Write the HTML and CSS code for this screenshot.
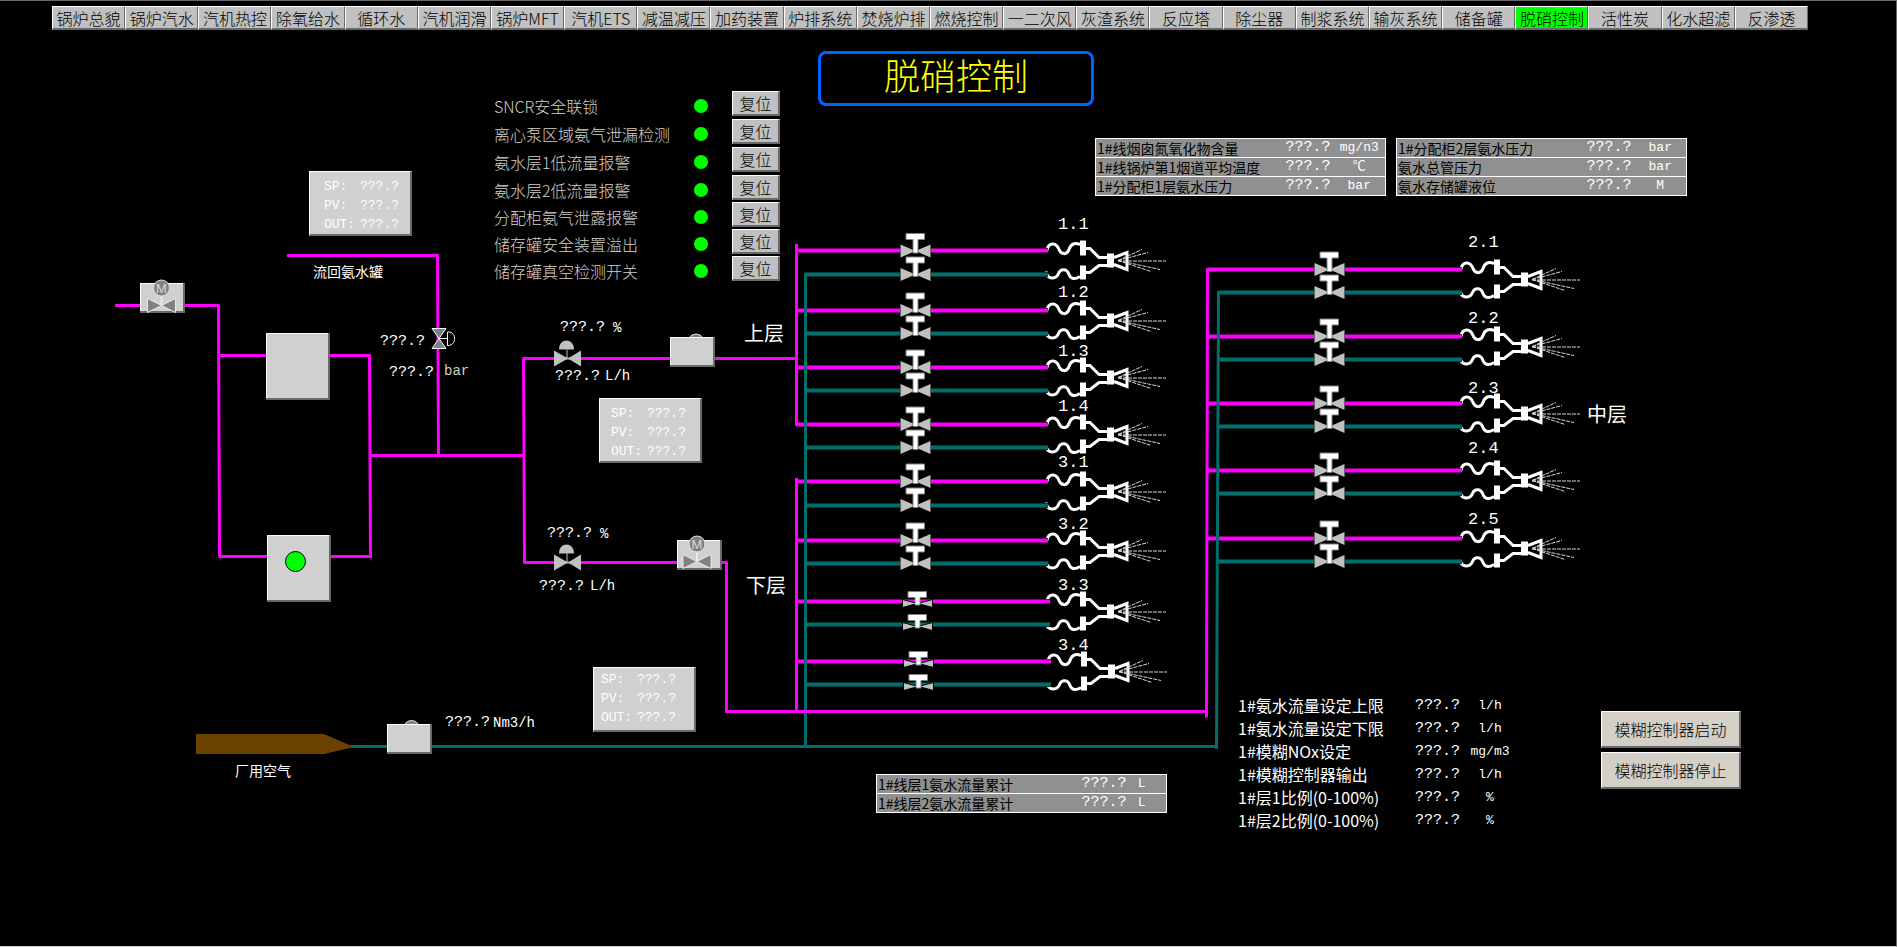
FILE: index.html
```html
<!DOCTYPE html>
<html lang="zh-CN">
<head>
<meta charset="utf-8">
<title>脱硝控制</title>
<link rel="stylesheet" href="styles.css">
</head>
<body>
<div class="screen">

<svg class="diagram" role="group" aria-label="脱硝工艺流程">
  <defs>
    <g id="valve">
      <path class="bow" d="M-15 -6.5 L0 0 L-15 6.5 Z M15 -6.5 L0 0 L15 6.5 Z"/>
      <path class="handle" d="M-9.5 -17.5 H9 V-11.5 H2.5 V2 H-2.5 V-11.5 H-9.5 Z"/>
    </g>
    <g id="valve-low">
      <path class="bow outlined" d="M-15 -2 L0 2 L-15 6 Z M15 -2 L0 2 L15 6 Z"/>
      <path class="handle" d="M-9.5 -10 H9 V-4 H2.5 V3.5 H-2.5 V-4 H-9.5 Z"/>
    </g>
    <g id="injector">
      <path class="hose" d="M0 0 C1 -8 9 -9 12 -1 C14 4 20 5 22 -1 C24 -7 28 -8 33 -6"/>
      <path class="hose" d="M-1 21 C0 29 9 30 12 22 C14 18 20 18 22 24 C24 29 28 29 33 26"/>
      <path class="hose" d="M38 -2 H43 L52 7 H61 M38 22 H43 L52 15 H61"/>
      <path class="solid" d="M33 -10 h6 v15 h-6 Z M33 15 h6 v14 h-6 Z M60 3 h7 v14 h-7 Z"/>
      <path class="cone" d="M67 7 L80 2 V19 L67 14"/>
      <path class="spray" d="M71 10 L95 -1 M71 10 L101 2 M71 10.5 H119 M71 10 L113 19 M71 10 L104 21"/>
    </g>
    <g id="control-valve">
      <path class="bow" d="M-14 -8 L0 0 L-14 8 Z M13 -8 L0 0 L13 8 Z"/>
      <path class="bow" d="M-9 -9 C-9 -21 6 -21 6 -9 Z"/>
      <path class="stem" d="M-1 -9 V0"/>
    </g>
    <g id="motor">
      <circle class="motor-head" cx="0" cy="-17.5" r="8"/>
      <path class="motor-stem" d="M0 -9 V0"/>
      <path class="motor-bow" d="M-14 -7 L0 0 L-14 7 Z M14 -7 L0 0 L14 7 Z"/>
      <text class="motor-letter" x="0" y="-13" text-anchor="middle">M</text>
    </g>
    <path id="ammonia-feeds" d="M797 250.5 H900 M931 250.5 H1048 M797 310.5 H900 M931 310.5 H1048 M797 367.5 H900 M931 367.5 H1048 M797 424.5 H900 M931 424.5 H1048
      M797 481.5 H900 M931 481.5 H1048 M797 540.5 H900 M931 540.5 H1048 M797 601.5 H902 M903 601.5 H932 M933 601.5 H1050 M797 661.5 H903 M904 661.5 H933 M934 661.5 H1051
      M1208 269.5 H1314 M1345 269.5 H1462 M1208 336.5 H1314 M1345 336.5 H1462 M1208 403.5 H1314 M1345 403.5 H1462 M1208 470.5 H1314 M1345 470.5 H1462 M1208 538.5 H1314 M1345 538.5 H1462"/>
    <path id="air-feeds" d="M805 274.5 H900 M931 274.5 H1048 M805 333.5 H900 M931 333.5 H1048 M805 390.5 H900 M931 390.5 H1048 M805 447.5 H900 M931 447.5 H1048
      M805 505.5 H900 M931 505.5 H1048 M805 563.5 H900 M931 563.5 H1048 M805 624.5 H902 M903 624.5 H932 M933 624.5 H1050 M805 684.5 H903 M904 684.5 H933 M934 684.5 H1051
      M1218 292.5 H1314 M1345 292.5 H1462 M1218 359.5 H1314 M1345 359.5 H1462 M1218 426.5 H1314 M1345 426.5 H1462 M1218 493.5 H1314 M1345 493.5 H1462 M1218 561.5 H1314 M1345 561.5 H1462"/>
  </defs>

  <!-- injectors -->
  <use href="#injector" x="1047" y="250.5"/>
  <use href="#injector" x="1047" y="310.5"/>
  <use href="#injector" x="1047" y="367.5"/>
  <use href="#injector" x="1047" y="424.5"/>
  <use href="#injector" x="1047" y="481.5"/>
  <use href="#injector" x="1047" y="540.5"/>
  <use href="#injector" x="1047" y="601.5"/>
  <use href="#injector" x="1048" y="661.5"/>
  <use href="#injector" x="1461" y="269.5"/>
  <use href="#injector" x="1461" y="336.5"/>
  <use href="#injector" x="1461" y="403.5"/>
  <use href="#injector" x="1461" y="470.5"/>
  <use href="#injector" x="1461" y="538.5"/>

  <!-- feeds -->
  <use href="#ammonia-feeds" class="ammonia-edge"/>
  <use href="#ammonia-feeds" class="ammonia"/>
  <path class="ammonia" d="M796.5 244 V426 M796.5 478 V711"/>
  <use href="#air-feeds" class="air-edge"/>
  <use href="#air-feeds" class="air"/>

  <!-- headers -->
  <path class="air" d="M350 746.5 H1218 M805.5 273 V746 M1218.5 291 L1216.5 749"/>
  <path class="ammonia" d="M115 305.5 H218.5 L219.5 556.5 H371 M218.5 355.5 H369.5 L370.5 558 M371 455.5 H524 M287 255.5 H437.5 L438.5 455.5"/>
  <path class="ammonia" d="M796.5 358.5 H523.5 L524.5 562.5 H726.5 V711.5 M725 711.5 H1207 M1206.5 717.5 L1207.5 269.5 H1212"/>

  <!-- manual valves -->
  <use href="#valve" x="915.5" y="251"/><use href="#valve" x="915.5" y="274.5"/>
  <use href="#valve" x="915.5" y="310.5"/><use href="#valve" x="915.5" y="333.5"/>
  <use href="#valve" x="915.5" y="367.5"/><use href="#valve" x="915.5" y="390.5"/>
  <use href="#valve" x="915.5" y="424.5"/><use href="#valve" x="915.5" y="447.5"/>
  <use href="#valve" x="915.5" y="481.5"/><use href="#valve" x="915.5" y="505.5"/>
  <use href="#valve" x="915.5" y="540.5"/><use href="#valve" x="915.5" y="563.5"/>
  <use href="#valve-low" x="917.5" y="601.5"/><use href="#valve-low" x="917.5" y="624.5"/>
  <use href="#valve-low" x="918.5" y="661.5"/><use href="#valve-low" x="918.5" y="684.5"/>
  <use href="#valve" x="1329.5" y="269.5"/><use href="#valve" x="1329.5" y="292.5"/>
  <use href="#valve" x="1329.5" y="336.5"/><use href="#valve" x="1329.5" y="359.5"/>
  <use href="#valve" x="1329.5" y="403.5"/><use href="#valve" x="1329.5" y="426.5"/>
  <use href="#valve" x="1329.5" y="470.5"/><use href="#valve" x="1329.5" y="493.5"/>
  <use href="#valve" x="1329.5" y="538.5"/><use href="#valve" x="1329.5" y="561.5"/>

  <!-- control valves -->
  <use href="#control-valve" x="568" y="358.5"/>
  <use href="#control-valve" x="568" y="562.5"/>
  <path class="relief" d="M432 328.5 H446 L439 338.5 L446 348.5 H432 L439 338.5 Z"/>
  <path class="relief-arm" d="M439 338.5 H447.5 M447.5 332 V345.5 M447.5 332 C457 331 457 346 447.5 345.5"/>

  <!-- equipment -->
  <path class="shade" d="M266 333 h64 v67 h-64 Z M267 535 h64 v67 h-64 Z"/>
  <path class="light" d="M266 333 h62 v65 h-62 Z M267 535 h62 v65 h-62 Z"/>
  <path class="face" d="M267 334 h61 v64 h-61 Z M268 536 h61 v64 h-61 Z"/>
  <circle class="running" cx="295.5" cy="561.5" r="10"/>
  <circle class="motor-head" cx="696" cy="342" r="8"/>
  <circle class="motor-head" cx="411.5" cy="728.5" r="8"/>
  <path class="shade" d="M140 283 h45 v30 h-45 Z M677 540 h45 v30 h-45 Z M670 337 h45 v30 h-45 Z M387 724 h45 v30 h-45 Z"/>
  <path class="light" d="M140 283 h43 v28 h-43 Z M677 540 h43 v28 h-43 Z M670 337 h43 v28 h-43 Z M387 724 h43 v28 h-43 Z"/>
  <path class="face" d="M141 284 h42 v27 h-42 Z M678 541 h42 v27 h-42 Z M671 338 h42 v27 h-42 Z M388 725 h42 v27 h-42 Z"/>
  <use href="#motor" x="161.5" y="305.5"/>
  <use href="#motor" x="697" y="561.5"/>
  <path class="source" d="M196 734 H324 L354 747 L324 754 H196 Z"/>

  <!-- names -->
  <g class="tag">
    <text x="1058" y="229">1.1</text><text x="1058" y="297">1.2</text>
    <text x="1058" y="356">1.3</text><text x="1058" y="411">1.4</text>
    <text x="1058" y="467">3.1</text><text x="1058" y="529">3.2</text>
    <text x="1058" y="590">3.3</text><text x="1058" y="650">3.4</text>
    <text x="1468" y="247">2.1</text><text x="1468" y="323">2.2</text>
    <text x="1468" y="393">2.3</text><text x="1468" y="453">2.4</text>
    <text x="1468" y="524">2.5</text>
  </g>
  <g class="layer">
    <text x="744" y="341">上层</text>
    <text x="746" y="593">下层</text>
    <text x="1587" y="422">中层</text>
  </g>
  <g class="name">
    <text x="313" y="277">流回氨水罐</text>
    <text x="235" y="776">厂用空气</text>
  </g>

  <!-- readings -->
  <g class="reading">
    <text x="380" y="345">???.?</text><text x="389" y="376">???.?</text>
    <text x="560" y="331">???.?</text><text x="555" y="380">???.?</text>
    <text x="547" y="537">???.?</text><text x="539" y="590">???.?</text>
    <text x="445" y="726">???.?</text>
  </g>
  <g class="unit">
    <text x="613" y="332">%</text><text x="605" y="380">L/h</text>
    <text x="600" y="538">%</text><text x="590" y="590">L/h</text>
    <text x="493" y="727">Nm3/h</text>
    <text class="unit-soft" x="444" y="375">bar</text>
  </g>
</svg>

<nav class="nav" aria-label="画面切换">
  <button>锅炉总貌</button><button>锅炉汽水</button><button>汽机热控</button><button>除氧给水</button><button>循环水</button><button>汽机润滑</button><button>锅炉MFT</button><button>汽机ETS</button><button>减温减压</button><button>加药装置</button><button>炉排系统</button><button>焚烧炉排</button><button>燃烧控制</button><button>一二次风</button><button>灰渣系统</button><button>反应塔</button><button>除尘器</button><button>制浆系统</button><button>输灰系统</button><button>储备罐</button><button class="current" aria-current="page">脱硝控制</button><button>活性炭</button><button>化水超滤</button><button>反渗透</button>
</nav>

<h1 class="title">脱硝控制</h1>

<ul class="alarms">
  <li><span>SNCR安全联锁</span><i class="lamp"></i><button>复位</button></li>
  <li><span>离心泵区域氨气泄漏检测</span><i class="lamp"></i><button>复位</button></li>
  <li><span>氨水层1低流量报警</span><i class="lamp"></i><button>复位</button></li>
  <li><span>氨水层2低流量报警</span><i class="lamp"></i><button>复位</button></li>
  <li><span>分配柜氨气泄露报警</span><i class="lamp"></i><button>复位</button></li>
  <li><span>储存罐安全装置溢出</span><i class="lamp"></i><button>复位</button></li>
  <li><span>储存罐真空检测开关</span><i class="lamp"></i><button>复位</button></li>
</ul>

<dl class="loop loop-return">
  <dt>SP:</dt><dd>???.?</dd><dt>PV:</dt><dd>???.?</dd><dt>OUT:</dt><dd>???.?</dd>
</dl>
<dl class="loop loop-upper">
  <dt>SP:</dt><dd>???.?</dd><dt>PV:</dt><dd>???.?</dd><dt>OUT:</dt><dd>???.?</dd>
</dl>
<dl class="loop loop-lower">
  <dt>SP:</dt><dd>???.?</dd><dt>PV:</dt><dd>???.?</dd><dt>OUT:</dt><dd>???.?</dd>
</dl>

<table class="meter meter-flue">
  <tr><th scope="row">1#线烟囱氮氧化物含量</th><td>???.?</td><td>mg/n3</td></tr>
  <tr><th scope="row">1#线锅炉第1烟道平均温度</th><td>???.?</td><td>℃</td></tr>
  <tr><th scope="row">1#分配柜1层氨水压力</th><td>???.?</td><td>bar</td></tr>
</table>
<table class="meter meter-water">
  <tr><th scope="row">1#分配柜2层氨水压力</th><td>???.?</td><td>bar</td></tr>
  <tr><th scope="row">氨水总管压力</th><td>???.?</td><td>bar</td></tr>
  <tr><th scope="row">氨水存储罐液位</th><td>???.?</td><td>M</td></tr>
</table>
<table class="meter meter-total">
  <tr><th scope="row">1#线层1氨水流量累计</th><td>???.?</td><td>L</td></tr>
  <tr><th scope="row">1#线层2氨水流量累计</th><td>???.?</td><td>L</td></tr>
</table>

<table class="settings">
  <tr><th scope="row">1#氨水流量设定上限</th><td>???.?</td><td>l/h</td></tr>
  <tr><th scope="row">1#氨水流量设定下限</th><td>???.?</td><td>l/h</td></tr>
  <tr><th scope="row">1#模糊NOx设定</th><td>???.?</td><td>mg/m3</td></tr>
  <tr><th scope="row">1#模糊控制器输出</th><td>???.?</td><td>l/h</td></tr>
  <tr><th scope="row">1#层1比例(0-100%)</th><td>???.?</td><td>%</td></tr>
  <tr><th scope="row">1#层2比例(0-100%)</th><td>???.?</td><td>%</td></tr>
</table>

<div class="actions">
  <button>模糊控制器启动</button>
  <button>模糊控制器停止</button>
</div>

</div>
</body>
</html>
```
FILE: styles.css
```css
* { box-sizing: border-box; }

body {
  margin: 0;
  background: #000;
  color: #fff;
  font-family: "Liberation Mono", "Noto Sans CJK SC", monospace;
  font-size: 16px;
}

.screen {
  position: relative;
  min-height: 100vh;
  overflow: hidden;
  border-top: 1px solid #696969;
  border-right: 1px solid #696969;
  border-bottom: 1px solid #d0d0d0;
}

button {
  margin: 0;
  padding: 0;
  border: solid #696969;
  border-width: 1px 2px 2px 1px;
  border-top-color: #fff;
  border-left-color: #fff;
  border-radius: 0;
  background: #c0c0c0;
  color: #000;
  font-family: "Liberation Sans Narrow", "Noto Sans CJK SC", sans-serif;
  font-size: 16px;
  font-weight: 300;
  line-height: 20px;
  white-space: nowrap;
}

/* navigation */
.nav {
  position: relative;
  display: grid;
  grid-template-columns: repeat(24, 1fr);
  margin: 5px 88px 0 52px;
}
.nav button { height: 24px; border-right-width: 1px; }
.nav .current { background: #0f0; }

/* diagram */
.diagram {
  position: absolute;
  top: -1px;
  left: 0;
  width: 100%;
  height: 100%;
  overflow: visible;
}
.ammonia, .ammonia-edge, .air, .air-edge { fill: none; stroke-linejoin: round; }
.ammonia { stroke: #f0f; stroke-width: 3px; }
.ammonia-edge { stroke: #800080; stroke-width: 5px; }
.air { stroke: #006e6a; stroke-width: 3px; }
.air-edge { stroke: #003c3a; stroke-width: 5px; }
.bow { fill: #c0c0c0; }
.outlined { stroke: #000; stroke-width: 1px; }
.handle { fill: #fff; stroke: #808080; stroke-width: 1px; }
.stem { stroke: #c0c0c0; stroke-width: 1px; }
.hose { fill: none; stroke: #fff; stroke-width: 3px; }
.solid { fill: #fff; }
.cone { fill: none; stroke: #fff; stroke-width: 3px; }
.spray { fill: none; stroke: #d8d8d8; stroke-width: 1px; stroke-dasharray: 4 1; }
.relief { fill: #808080; stroke: #fff; stroke-width: 1px; }
.relief-arm { fill: none; stroke: #fff; stroke-width: 1px; }
.shade { fill: #696969; }
.light { fill: #fff; }
.face { fill: #d0d0d0; }
.running { fill: #0f0; stroke: #000; stroke-width: 1px; }
.motor-head { fill: #808080; stroke: #e0e0e0; stroke-width: 1px; }
.motor-stem { stroke: #e8e8e8; stroke-width: 2px; }
.motor-bow { fill: #808080; stroke: #e8e8e8; stroke-width: 1px; }
.motor-letter { font: 13px "Liberation Sans", sans-serif; }
.source { fill: #6b4200; }

.diagram text { fill: #fff; }
.tag { font-size: 17px; }
.layer { font-size: 20px; }
.name { font-size: 14px; }
.reading { font-size: 15px; }
.unit { font-size: 14px; }
.diagram .unit-soft { fill: #d4d0c8; }
.diagram .motor-letter { fill: #d8d8d8; }

/* title */
.title {
  position: absolute;
  top: 50px;
  left: 818px;
  width: 276px;
  height: 55px;
  margin: 0;
  border: 3px solid #0064ff;
  border-radius: 8px;
  color: #ff0;
  font-size: 36px;
  font-weight: 300;
  line-height: 54px;
  text-align: center;
}

/* alarms */
.alarms {
  position: absolute;
  top: 90px;
  left: 494px;
  width: 286px;
  margin: 0;
  padding: 0;
  list-style: none;
  color: #d4d0c8;
  font-family: "Liberation Sans Narrow", "Noto Sans CJK SC", sans-serif;
  font-weight: 300;
}
.alarms li {
  display: grid;
  grid-template-columns: 1fr 38px 48px;
  align-items: start;
  height: 28px;
  line-height: 30px;
}
.alarms li:nth-child(n+4) { height: 27px; }
.alarms button { height: 25px; }
.lamp {
  width: 14px;
  height: 14px;
  margin-top: 8px;
  border-radius: 50%;
  background: #0f0;
}

/* controller readouts */
.loop {
  position: absolute;
  display: grid;
  grid-template-columns: 36px auto;
  justify-content: start;
  width: 103px;
  height: 65px;
  margin: 0;
  padding: 5px 0 0 14px;
  border: solid #696969;
  border-width: 1px 2px 2px 1px;
  border-top-color: #fff;
  border-left-color: #fff;
  background: #d0d0d0;
  font-size: 13px;
  line-height: 19px;
}
.loop dd { margin: 0; }
.loop-return { top: 170px; left: 309px; }
.loop-upper { top: 397px; left: 599px; padding-left: 11px; }
.loop-lower { top: 666px; left: 593px; padding: 2px 0 3px 7px; }

/* meters */
.meter {
  position: absolute;
  width: 291px;
  border-collapse: collapse;
  table-layout: fixed;
  background: #909090;
}
.meter tr { border: 1px solid #fff; }
.meter th {
  padding: 0 0 0 1px;
  color: #000;
  font-family: "Liberation Sans Narrow", "Noto Sans CJK SC", sans-serif;
  font-size: 14px;
  font-weight: 400;
  line-height: 18px;
  text-align: left;
  white-space: nowrap;
}
.meter td { padding: 0; font-size: 15px; line-height: 18px; }
.meter td:nth-child(2) { width: 48px; }
.meter td:nth-child(3) { width: 52px; font-size: 13px; text-align: center; }
.meter-flue { top: 137px; left: 1095px; }
.meter-water { top: 137px; left: 1396px; }
.meter-total { top: 773px; left: 876px; }
.meter-total td:nth-child(3) { width: 37px; padding-right: 12px; }

/* settings */
.settings {
  position: absolute;
  top: 693px;
  left: 1238px;
  width: 278px;
  border-collapse: collapse;
}
.settings th, .settings td { height: 23px; padding: 0; line-height: 23px; }
.settings th {
  font-family: "Liberation Sans Narrow", "Noto Sans CJK SC", sans-serif;
  font-size: 16px;
  font-weight: 400;
  text-align: left;
  white-space: nowrap;
}
.settings td { font-size: 15px; }
.settings td:nth-child(2) { width: 49px; }
.settings td:nth-child(3) { width: 52px; font-size: 13px; text-align: center; }

/* commands */
.actions {
  position: absolute;
  top: 710px;
  left: 1601px;
  display: grid;
  gap: 4px;
  width: 140px;
}
.actions button { height: 37px; background: #d4d0c8; }
```
